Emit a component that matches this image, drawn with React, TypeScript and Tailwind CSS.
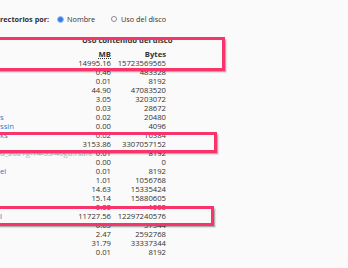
import React from "react";

type Row = { name?: string; mb: string; bytes: string; faint?: boolean };

const rows: Row[] = [
  { mb: "14995.16", bytes: "15723569565" },
  { mb: "0.46", bytes: "483328" },
  { mb: "0.01", bytes: "8192" },
  { mb: "44.90", bytes: "47083520" },
  { mb: "3.05", bytes: "3203072" },
  { mb: "0.03", bytes: "28672" },
  { name: "s", mb: "0.02", bytes: "20480" },
  { name: "ssin", mb: "0.00", bytes: "4096" },
  { name: "ks", mb: "0.02", bytes: "16384" },
  { mb: "3153.86", bytes: "3307057152" },
  { name: "d_2021g-14-55-40gb.rsafe", mb: "0.01", bytes: "8192", faint: true },
  { mb: "0.00", bytes: "0" },
  { name: "el", mb: "0.01", bytes: "8192" },
  { mb: "1.01", bytes: "1056768" },
  { mb: "14.63", bytes: "15335424" },
  { mb: "15.14", bytes: "15880605" },
  { mb: "0.00", bytes: "1000" },
  { name: "l", mb: "11727.56", bytes: "12297240576" },
  { mb: "0.05", bytes: "57344" },
  { mb: "2.47", bytes: "2592768" },
  { mb: "31.79", bytes: "33337344" },
  { mb: "0.01", bytes: "8192" },
];

const Mark = ({ cls }: { cls: string }) => (
  <div
    className={`absolute border-[3.5px] border-[#f9336b] shadow-[1.5px_1.5px_1.5px_rgba(0,0,0,0.3)] ${cls}`}
  ></div>
);

const App = () => {
  return (
    <div className="relative w-[348px] h-[268px] overflow-hidden bg-[#fafafa] text-[#333] font-['Open_Sans',sans-serif]">
      <div className="flex items-center h-[10px] mt-[14px] text-[7.3px] leading-[10px] whitespace-nowrap">
        <span className="font-bold w-[57px]">rectorios por:</span>
        <span className="w-[7px] h-[7px] rounded-full bg-[#2f7fe6] border border-[#9cc3f2] mr-[3px]"></span>
        <span className="w-[44px]">Nombre</span>
        <span className="w-[6px] h-[6px] rounded-full bg-white border border-[#8a8a8a] mr-[4px]"></span>
        <span>Uso del disco</span>
      </div>

      <div className="mt-[12px] text-[7.7px] grid grid-cols-[78px_33px_55px] w-[166px]">
        <div className="h-[9px] leading-[9px]"></div>
        <div className="col-span-2 h-[9px] leading-[9px] font-bold text-center pl-[4px] whitespace-nowrap">
          Uso contenido del disco
        </div>
        <div className="h-[5px] col-span-3"></div>
        <div className="h-[9px] leading-[9px]"></div>
        <div className="h-[9px] leading-[9px] text-right font-bold">
          <abbr className="underline decoration-dotted underline-offset-1">MB</abbr>
        </div>
        <div className="h-[9px] leading-[9px] text-right font-bold">Bytes</div>
        {rows.map((r, i) => (
          <React.Fragment key={i}>
            <div
              className={`h-[9px] leading-[9px] whitespace-nowrap ${
                r.faint ? "text-[#a8bcd6]" : "text-[#2f78c8]"
              }`}
            >
              {r.name}
            </div>
            <div className="h-[9px] leading-[9px] text-right">{r.mb}</div>
            <div className="h-[9px] leading-[9px] text-right">{r.bytes}</div>
          </React.Fragment>
        ))}
      </div>

      <Mark cls="left-[-10px] top-[37px] w-[235px] h-[34px]" />
      <Mark cls="left-[-10px] top-[131.5px] w-[227px] h-[21.5px]" />
      <Mark cls="left-[-10px] top-[206px] w-[224px] h-[19.5px]" />
    </div>
  );
};

export default App;
